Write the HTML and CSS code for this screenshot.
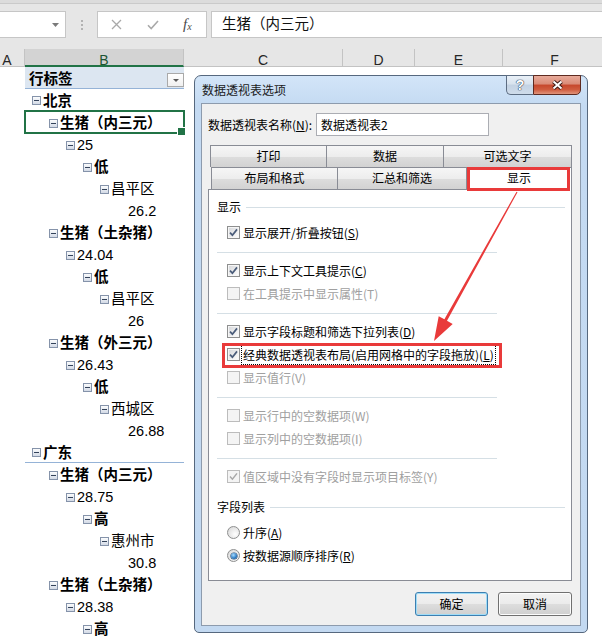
FILE: index.html
```html
<!DOCTYPE html>
<html>
<head>
<meta charset="utf-8">
<link rel="stylesheet" href="styles.css">
</head>
<body>
<div class="topline"></div>
<div class="fbar">
  <div class="namebox"><svg width="7" height="4" viewBox="0 0 7 4"><path d="M0 0H7L3.5 4Z" fill="#7a7a7a"/></svg></div>
  <div class="grip"><i></i><i></i><i></i></div>
  <div class="fxbox">
    <svg width="11" height="11" viewBox="0 0 11 11"><path d="M1 1L10 10M10 1L1 10" stroke="#a9a9a9" stroke-width="1.3" fill="none"/></svg>
    <svg class="fx-ok" width="12" height="10" viewBox="0 0 12 10"><path d="M1 5.2L4.2 8.5L11 1" stroke="#a9a9a9" stroke-width="1.6" fill="none"/></svg>
    <span class="fx">f<span class="fx-x">x</span></span>
  </div>
  <div class="finput">生猪（内三元）</div>
</div>
<div class="colheads">
  <div class="ch ch-a">A</div>
  <div class="ch ch-b">B</div>
  <div class="ch ch-c">C</div>
  <div class="ch ch-d">D</div>
  <div class="ch ch-e">E</div>
  <div class="ch ch-f">F</div>
</div>
<div class="sheet">
  <div class="col-a"></div>
  <div class="pivot">
    <div class="pv-head">行标签<span class="pv-drop"><svg width="6" height="3" viewBox="0 0 6 3"><path d="M0 0H6L3 3Z" fill="#5a5a5a"/></svg></span></div>
    <div class="r l1 b top"><i class="tg"></i>北京</div>
    <div class="r l2 b sel"><i class="tg"></i>生猪（内三元）</div>
    <div class="r l3"><i class="tg"></i>25</div>
    <div class="r l4 b"><i class="tg"></i>低</div>
    <div class="r l5"><i class="tg"></i>昌平区</div>
    <div class="r l6">26.2</div>
    <div class="r l2 b"><i class="tg"></i>生猪（土杂猪）</div>
    <div class="r l3"><i class="tg"></i>24.04</div>
    <div class="r l4 b"><i class="tg"></i>低</div>
    <div class="r l5"><i class="tg"></i>昌平区</div>
    <div class="r l6">26</div>
    <div class="r l2 b"><i class="tg"></i>生猪（外三元）</div>
    <div class="r l3"><i class="tg"></i>26.43</div>
    <div class="r l4 b"><i class="tg"></i>低</div>
    <div class="r l5"><i class="tg"></i>西城区</div>
    <div class="r l6">26.88</div>
    <div class="r l1 b top"><i class="tg"></i>广东</div>
    <div class="r l2 b"><i class="tg"></i>生猪（内三元）</div>
    <div class="r l3"><i class="tg"></i>28.75</div>
    <div class="r l4 b"><i class="tg"></i>高</div>
    <div class="r l5"><i class="tg"></i>惠州市</div>
    <div class="r l6">30.8</div>
    <div class="r l2 b"><i class="tg"></i>生猪（土杂猪）</div>
    <div class="r l3"><i class="tg"></i>28.38</div>
    <div class="r l4 b"><i class="tg"></i>高</div>
  </div>
</div>

<div class="dialog">
  <div class="titlebar">
    <span class="title">数据透视表选项</span>
    <div class="caps">
      <span class="cap-help">?</span>
      <span class="cap-close"><svg width="13" height="10" viewBox="0 0 13 10"><path d="M2.5 1.5L10.5 8.5M10.5 1.5L2.5 8.5" stroke="#3c1a14" stroke-width="4" fill="none"/><path d="M2.5 1.5L10.5 8.5M10.5 1.5L2.5 8.5" stroke="#fff" stroke-width="2" fill="none"/></svg></span>
    </div>
  </div>
  <div class="client">
    <div class="namerow"><span class="nlabel">数据透视表名称(<u>N</u>):</span><div class="textbox">数据透视表2</div></div>
    <div class="tabs">
      <div class="tabrow">
        <div class="tab t1">打印</div>
        <div class="tab t2">数据</div>
        <div class="tab t3">可选文字</div>
      </div>
      <div class="tabrow r2">
        <div class="tab t4">布局和格式</div>
        <div class="tab t5">汇总和筛选</div>
        <div class="tab t6 active">显示</div>
      </div>
    </div>
    <div class="panel">
      <div class="grp">显示</div>
      <div class="opt"><span class="cb"><svg width="11" height="11" viewBox="0 0 11 11"><path d="M2 5.6L4.4 8.2L9 2.4" stroke="#4a5c7a" stroke-width="1.7" fill="none"/></svg></span><span>显示展开/折叠按钮(<u>S</u>)</span></div>
      <div class="sep"></div>
      <div class="opt"><span class="cb"><svg width="11" height="11" viewBox="0 0 11 11"><path d="M2 5.6L4.4 8.2L9 2.4" stroke="#4a5c7a" stroke-width="1.7" fill="none"/></svg></span><span>显示上下文工具提示(<u>C</u>)</span></div>
      <div class="opt dis"><span class="cb"></span><span>在工具提示中显示属性(T)</span></div>
      <div class="sep"></div>
      <div class="opt"><span class="cb"><svg width="11" height="11" viewBox="0 0 11 11"><path d="M2 5.6L4.4 8.2L9 2.4" stroke="#4a5c7a" stroke-width="1.7" fill="none"/></svg></span><span>显示字段标题和筛选下拉列表(<u>D</u>)</span></div>
      <div class="opt"><span class="cb"><svg width="11" height="11" viewBox="0 0 11 11"><path d="M2 5.6L4.4 8.2L9 2.4" stroke="#4a5c7a" stroke-width="1.7" fill="none"/></svg></span><span class="focus">经典数据透视表布局(启用网格中的字段拖放)(<u>L</u>)</span></div>
      <div class="opt dis"><span class="cb"></span><span>显示值行(V)</span></div>
      <div class="sep"></div>
      <div class="opt dis"><span class="cb"></span><span>显示行中的空数据项(W)</span></div>
      <div class="opt dis"><span class="cb"></span><span>显示列中的空数据项(I)</span></div>
      <div class="sep"></div>
      <div class="opt dis"><span class="cb"><svg width="11" height="11" viewBox="0 0 11 11"><path d="M2 5.6L4.4 8.2L9 2.4" stroke="#a8a8a8" stroke-width="1.5" fill="none"/></svg></span><span>值区域中没有字段时显示项目标签(Y)</span></div>
      <div class="grp grp2">字段列表</div>
      <div class="opt"><span class="rb"></span><span>升序(<u>A</u>)</span></div>
      <div class="opt"><span class="rb on"></span><span>按数据源顺序排序(<u>R</u>)</span></div>
    </div>
    <div class="btnrow">
      <div class="btn btn-ok">确定</div>
      <div class="btn btn-cancel">取消</div>
    </div>
  </div>
</div>

<div class="mark mark-tab"></div>
<div class="mark mark-row"></div>
<svg class="arrow" width="602" height="636" viewBox="0 0 602 636">
  <polygon points="516.5,191.7 517.5,192.3 447,320.8 452.7,323.9 434,341 438.7,316.2 444.4,319.3" fill="#e93a3a"/>
</svg>
</body>
</html>
```

FILE: styles.css
```css
* { box-sizing: border-box; }
html, body { margin: 0; padding: 0; }
body {
  width: 602px;
  height: 636px;
  overflow: hidden;
  position: relative;
  background: #fff;
  color: #000;
  font-family: "Liberation Sans", "Noto Sans CJK SC", sans-serif;
}

/* formula bar */
.topline { height: 4px; background: #dcdcdc; border-bottom: 1px solid #cacaca; }
.fbar {
  height: 45px;
  padding-top: 7px;
  background: #e6e6e6;
  display: flex;
  align-items: flex-start;
}
.namebox {
  width: 67px; height: 27px; margin-left: -1px;
  background: #fff; border: 1px solid #c6c6c6;
  display: flex; align-items: center; justify-content: flex-end;
  padding-right: 6px;
}
.namebox svg, .fxbox svg, .pv-drop svg { display: block; }
.grip {
  width: 31px; height: 27px;
  display: flex; flex-direction: column; align-items: center; justify-content: center; gap: 2px;
}
.grip i { display: block; width: 2px; height: 2px; background: #b2b2b2; }
.fxbox {
  width: 110px; height: 27px;
  background: #fff; border: 1px solid #c6c6c6;
  display: flex; align-items: center;
  padding-left: 13px;
}
.fx-ok { margin-left: 25px; }
.fx {
  margin-left: 24px;
  font-family: "Liberation Serif", serif;
  font-style: italic;
  font-size: 15px;
  line-height: 15px;
  color: #4a4a4a;
}
.fx-x { font-size: 10px; position: relative; top: 1px; }
.finput {
  flex: 1; height: 27px;
  margin-left: 4px; margin-right: -4px;
  background: #fff; border: 1px solid #c6c6c6;
  padding-left: 10px;
  font-size: 14.5px; line-height: 25px;
  color: #111;
}

/* column headers */
.colheads { display: flex; height: 18px; background: #e6e6e6; }
.ch {
  flex: none; height: 18px;
  border-right: 1px solid #c3c3c3; border-bottom: 1px solid #c3c3c3;
  font-size: 14px; line-height: 14px; padding-top: 4px;
  text-align: center; color: #262626;
}
.ch-a { width: 25px; padding-right: 10px; }
.ch-b { width: 159px; background: #d3d3d3; border-bottom: 2px solid #217346; color: #1d5532; }
.ch-c { width: 159px; }
.ch-d { width: 72px; }
.ch-e { width: 88px; }
.ch-f { width: 104px; }

/* sheet and pivot */
.sheet { display: flex; }
.col-a { width: 25px; flex: none; }
.pivot { width: 159px; flex: none; font-size: 14.5px; }
.pv-head {
  height: 22px;
  background: #dce6f1;
  border-bottom: 1px solid #95b3d7;
  display: flex; align-items: center;
  padding: 2px 0 0 4px;
  font-weight: bold; line-height: 22px;
}
.pv-drop {
  margin-left: auto; margin-top: 3px;
  width: 17px; height: 14px;
  background: linear-gradient(#ffffff, #f0f0f0);
  border: 1px solid #a9a9a9;
  display: flex; align-items: center; justify-content: center;
}
.r {
  height: 22px;
  display: flex; align-items: center;
  padding-top: 2px;
  line-height: 22px;
  white-space: nowrap;
}
.b { font-weight: bold; }
.top { border-bottom: 1px solid #95b3d7; }
.l1 { padding-left: 7px; }
.l2 { padding-left: 24px; }
.l3 { padding-left: 41px; }
.l4 { padding-left: 58px; }
.l5 { padding-left: 75px; }
.l6 { padding-left: 103px; }
.tg {
  flex: none; width: 9px; height: 9px; margin-right: 2px;
  border: 1px solid #8593aa;
  background: linear-gradient(#fbfcfd, #d3dae6);
  position: relative;
}
.tg::after {
  content: ""; position: absolute;
  left: 1px; right: 1px; top: 3px; height: 1px;
  background: #33425a;
}
.sel { position: relative; }
.sel::after {
  content: ""; position: absolute;
  left: -1px; top: -1px; right: -1px; bottom: -1px;
  border: 2px solid #217346;
}
.sel::before {
  content: ""; position: absolute; z-index: 1;
  right: -2px; bottom: -3px; width: 7px; height: 7px;
  background: #217346; border: 1px solid #fff;
}

/* dialog */
.dialog {
  position: absolute; left: 194px; top: 75px;
  width: 394px; height: 558px;
  border: 1px solid #56687e;
  border-radius: 7px 7px 5px 5px;
  background: linear-gradient(#d3e5f8, #c4daf2 30px, #c3d9f1);
  padding: 0 6px 6px 6px;
  display: flex; flex-direction: column;
  font-family: "Noto Sans CJK SC", "Liberation Sans", sans-serif;
  font-size: 12px;
  color: #000;
}
.titlebar { height: 27px; flex: none; display: flex; align-items: flex-start; }
.title { padding: 7px 0 0 1px; line-height: 14px; color: #1a1a1a; }
.caps { display: flex; margin: -1px 0 0 auto; }
.cap-help {
  width: 27px; height: 20px;
  border: 1px solid #5d6d82; border-right: none;
  border-radius: 0 0 0 5px;
  background: linear-gradient(#e9f0f7, #d8e3ee 45%, #c3d2e3 50%, #cfdcea);
  display: flex; align-items: center; justify-content: center;
  font: bold 14px "Liberation Sans", sans-serif;
  color: #fff;
  text-shadow: 0 0 1px #2d3d55, 0 0 1px #2d3d55, 0 0 1px #2d3d55;
}
.cap-close {
  width: 48px; height: 20px;
  border: 1px solid #5e2a20;
  border-radius: 0 0 5px 0;
  background: linear-gradient(#e8ab9b, #da8a76 45%, #c6472c 50%, #cf5b3e 75%, #e0937a);
  display: flex; align-items: center; justify-content: center;
}
.cap-close svg { display: block; }
.client {
  flex: 1;
  background: #f0f0f0;
  border: 1px solid #8d9bad;
  padding: 9px 8px 0 6px;
  display: flex; flex-direction: column;
}
.namerow { display: flex; align-items: center; height: 23px; }
.nlabel { width: 108px; flex: none; }
.textbox {
  width: 173px; height: 23px;
  background: #fff; border: 1px solid #abadb3;
  padding-left: 4px; line-height: 21px;
}
.tabs { margin: 9px 1px 0 2px; }
.tabrow { display: flex; height: 22px; }
.tabrow.r2 { margin-left: 1px; }
.tab {
  flex: none; height: 22px;
  border: 1px solid #898c95; border-bottom: none;
  margin-left: -1px;
  background: linear-gradient(#f6f6f6, #ededed 50%, #dddddd 52%, #d2d2d2);
  text-align: center; line-height: 20px;
}
.tab:first-child { margin-left: 0; }
.t1 { width: 117px; }
.t2 { width: 118px; }
.t3 { width: 129px; }
.t4 { width: 127px; }
.t5 { width: 130px; }
.t6 { width: 106px; }
.tab.active { background: #fff; height: 23px; position: relative; z-index: 1; }
.panel {
  height: 392px;
  background: #fff;
  border: 1px solid #898c95;
  padding: 8px 6px 0 8px;
}
.grp { display: flex; align-items: center; height: 18px; gap: 5px; line-height: 18px; }
.grp::after { content: ""; flex: 1; height: 1px; background: #d5dfe5; }
.grp2 { margin-top: 10px; }
.grp + .opt { margin-top: 5px; }
.opt {
  display: flex; align-items: center;
  height: 23px; padding-left: 10px; gap: 3px;
  white-space: nowrap; line-height: 23px;
}
.sep { width: 280px; height: 1px; background: #d5dfe5; margin: 8px 0 6px; }
.dis { color: #a0a0a0; }
.cb {
  flex: none; width: 13px; height: 13px;
  border: 1px solid #8e8f8f;
  background: linear-gradient(135deg, #d3d5d9, #f1f1f1 65%, #ffffff);
  box-shadow: inset 0 0 0 1px #f6f6f6;
}
.cb svg { display: block; }
.dis .cb { border-color: #bcbcbc; background: #f4f4f4; box-shadow: none; }
.rb {
  flex: none; width: 13px; height: 13px; border-radius: 50%;
  border: 1px solid #8e8f8f;
  background: radial-gradient(circle at 65% 65%, #ffffff, #dadada 85%);
  position: relative;
}
.rb.on::after {
  content: ""; position: absolute;
  left: 2.5px; top: 2.5px; width: 6px; height: 6px; border-radius: 50%;
  background: radial-gradient(circle at 40% 35%, #a9ddff, #2a79c2 60%, #13406e);
  box-shadow: 0 0 0 0.6px #24476e;
}
.focus {
  border: 1px dotted #000;
  padding: 0 1px; margin-left: -2px;
  line-height: 18px;
}
.btnrow { display: flex; justify-content: flex-end; gap: 10px; margin-top: 11px; }
.btn {
  height: 24px;
  border: 1px solid #707070; border-radius: 3px;
  background: linear-gradient(#f2f2f2, #ebebeb 50%, #dddddd 51%, #cfcfcf);
  box-shadow: inset 0 0 0 1px #fcfcfc;
  text-align: center; line-height: 21px;
}
.btn-ok { width: 73px; border-color: #3c7fb1; box-shadow: inset 0 0 0 1px #9fdcf7; }
.btn-cancel { width: 74px; }

/* annotations */
.mark { position: absolute; border: 3px solid #e93a3a; z-index: 5; }
.mark-tab { left: 467px; top: 167px; width: 103px; height: 24px; }
.mark-row { left: 222px; top: 343px; width: 280px; height: 25px; }
.arrow { position: absolute; left: 0; top: 0; z-index: 6; }
```
